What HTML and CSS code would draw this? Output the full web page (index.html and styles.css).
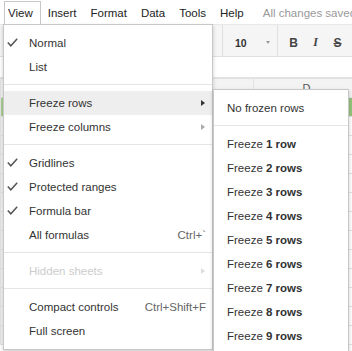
FILE: index.html
```html
<!DOCTYPE html>
<html lang="en">

<head>
    <meta charset="UTF-8">
    <meta name="viewport" content="width=device-width, initial-scale=1.0">
    <title>Sheet - View menu</title>
    <link rel="stylesheet" href="styles.css">
</head>

<body>

    <div class="menubar">
        <div class="mb-item open">View</div>
        <div class="mb-item">Insert</div>
        <div class="mb-item">Format</div>
        <div class="mb-item">Data</div>
        <div class="mb-item">Tools</div>
        <div class="mb-item">Help</div>
        <div class="mb-status">All changes saved</div>
    </div>

    <div class="toolbar">
        <div class="tb-hidden"></div>
        <div class="tb-sep"></div>
        <div class="tb-font-size">
            <span>10</span>
            <span class="tb-caret"></span>
        </div>
        <div class="tb-sep"></div>
        <div class="tb-btn bold">B</div>
        <div class="tb-btn italic">I</div>
        <div class="tb-btn strike">S</div>
    </div>

    <div class="formula-bar"></div>

    <table class="grid">
        <tr class="col-heads">
            <td class="row-head"></td>
            <td class="col-a">A</td>
            <td class="col-b">B</td>
            <td class="col-d">D</td>
            <td class="col-e"></td>
        </tr>
        <tr><td class="row-head selected"></td><td></td><td></td><td class="selected-cell"></td><td></td></tr>
        <tr><td class="row-head"></td><td></td><td></td><td></td><td></td></tr>
        <tr><td class="row-head"></td><td></td><td></td><td></td><td></td></tr>
        <tr><td class="row-head"></td><td></td><td></td><td></td><td></td></tr>
        <tr><td class="row-head"></td><td></td><td></td><td></td><td></td></tr>
        <tr><td class="row-head"></td><td></td><td></td><td></td><td></td></tr>
        <tr><td class="row-head"></td><td></td><td></td><td></td><td></td></tr>
        <tr><td class="row-head"></td><td></td><td></td><td></td><td></td></tr>
        <tr><td class="row-head"></td><td></td><td></td><td></td><td></td></tr>
        <tr><td class="row-head"></td><td></td><td></td><td></td><td></td></tr>
        <tr><td class="row-head"></td><td></td><td></td><td></td><td></td></tr>
        <tr><td class="row-head"></td><td></td><td></td><td></td><td></td></tr>
        <tr><td class="row-head"></td><td></td><td></td><td></td><td></td></tr>
    </table>

    <!-- View dropdown -->
    <div class="menu view-menu">
        <div class="item checked">
            <svg class="check" width="11" height="9" viewBox="0 0 11 9"><path d="M0.8 4.6 L3.8 7.8 L10.2 0.8" /></svg>
            Normal
        </div>
        <div class="item">List</div>
        <div class="sep"></div>
        <div class="item has-sub active">Freeze rows</div>
        <div class="item has-sub">Freeze columns</div>
        <div class="sep"></div>
        <div class="item checked">
            <svg class="check" width="11" height="9" viewBox="0 0 11 9"><path d="M0.8 4.6 L3.8 7.8 L10.2 0.8" /></svg>
            Gridlines
        </div>
        <div class="item checked">
            <svg class="check" width="11" height="9" viewBox="0 0 11 9"><path d="M0.8 4.6 L3.8 7.8 L10.2 0.8" /></svg>
            Protected ranges
        </div>
        <div class="item checked">
            <svg class="check" width="11" height="9" viewBox="0 0 11 9"><path d="M0.8 4.6 L3.8 7.8 L10.2 0.8" /></svg>
            Formula bar
        </div>
        <div class="item">All formulas<span class="key">Ctrl+`</span></div>
        <div class="sep"></div>
        <div class="item has-sub disabled">Hidden sheets</div>
        <div class="sep"></div>
        <div class="item">Compact controls<span class="key">Ctrl+Shift+F</span></div>
        <div class="item">Full screen</div>
    </div>

    <!-- Freeze rows submenu -->
    <div class="menu freeze-menu">
        <div class="item">No frozen rows</div>
        <div class="sep"></div>
        <div class="item">Freeze&nbsp;<b>1 row</b></div>
        <div class="item">Freeze&nbsp;<b>2 rows</b></div>
        <div class="item">Freeze&nbsp;<b>3 rows</b></div>
        <div class="item">Freeze&nbsp;<b>4 rows</b></div>
        <div class="item">Freeze&nbsp;<b>5 rows</b></div>
        <div class="item">Freeze&nbsp;<b>6 rows</b></div>
        <div class="item">Freeze&nbsp;<b>7 rows</b></div>
        <div class="item">Freeze&nbsp;<b>8 rows</b></div>
        <div class="item">Freeze&nbsp;<b>9 rows</b></div>
    </div>

</body>

</html>
```

FILE: styles.css
```css
body {
    margin: 0;
    width: 352px;
    height: 351px;
    overflow: hidden;
    position: relative;
    background: #fff;
    font-family: "Liberation Sans", Arial, sans-serif;
    font-size: 11.5px;
    color: #333;
}

/* menu bar */

.menubar {
    display: flex;
    align-items: flex-start;
    height: 24px;
    padding-left: 4px;
    white-space: nowrap;
    overflow: hidden;
}

.mb-item {
    margin-top: 1px;
    padding: 0 6px;
    line-height: 23px;
    color: #222;
    border: 1px solid transparent;
    border-bottom: 0;
}

.mb-item.open {
    position: relative;
    z-index: 3;
    box-sizing: border-box;
    height: 24px;
    padding: 0 7px 0 3px;
    background: #fff;
    border-color: #c8c8c8;
}

.mb-status {
    margin-top: 1px;
    padding-left: 12px;
    line-height: 25px;
    color: #999;
}

/* toolbar */

.toolbar {
    display: flex;
    align-items: center;
    box-sizing: border-box;
    height: 33px;
    padding-top: 4px;
    background: #f5f5f5;
    border-top: 1px solid #e8e8e8;
    border-bottom: 1px solid #e0e0e0;
}

.tb-hidden {
    width: 222px;
}

.tb-sep {
    align-self: stretch;
    width: 1px;
    margin-top: -4px;
    background: #e0e0e0;
}

.tb-font-size {
    display: flex;
    align-items: center;
    box-sizing: border-box;
    width: 54px;
    padding-left: 12px;
    font-size: 10.5px;
    font-weight: bold;
    color: #333;
}

.tb-caret {
    margin-left: 19px;
    border-left: 2px solid transparent;
    border-right: 2px solid transparent;
    border-top: 3px solid #999;
}

.tb-btn {
    width: 11px;
    margin-left: 11px;
    text-align: center;
    font-size: 12px;
    font-weight: bold;
    color: #444;
}

.tb-btn.bold {
    margin-left: 10px;
}

.tb-btn.italic {
    font-family: "Liberation Serif", serif;
    font-style: italic;
}

.tb-btn.strike {
    text-decoration: line-through;
}

/* sheet */

.formula-bar {
    height: 21px;
    border-bottom: 1px solid #e2e2e2;
    box-sizing: border-box;
}

.grid {
    border-collapse: collapse;
    table-layout: fixed;
    width: 460px;
    font-size: 10px;
    color: #666;
}

.grid td {
    height: 18px;
    padding: 0;
    border: 1px solid #e2e2e2;
    text-align: center;
}

.grid .col-heads td {
    height: 18px;
    background: #f3f3f3;
    color: #555;
    font-size: 11px;
}

.grid .row-head {
    width: 34px;
    background: #f3f3f3;
}

.grid .row-head.selected {
    background: #a9cf93;
}

.grid .selected-cell {
    background: #93c47d;
}

.col-a {
    width: 109px;
}

.col-b {
    width: 107px;
}

.col-d {
    width: 105px;
}

.col-e {
    width: 100px;
}

/* menus */

.menu {
    position: absolute;
    z-index: 2;
    box-sizing: border-box;
    padding: 6px 0;
    background: #fff;
    border: 1px solid #c8c8c8;
    box-shadow: 0 2px 4px rgba(0, 0, 0, 0.2);
    white-space: nowrap;
}

.view-menu {
    left: 3px;
    top: 24px;
    width: 210px;
}

.freeze-menu {
    left: 213px;
    top: 89px;
    width: 136px;
}

.item {
    position: relative;
    display: flex;
    align-items: center;
    justify-content: space-between;
    height: 24px;
    padding: 0 6px 0 25px;
    color: #333;
}

.freeze-menu .item {
    justify-content: flex-start;
    padding-left: 13px;
}

.item.active {
    background: #eee;
}

.item.disabled {
    color: #ccc;
}

.key {
    color: #666;
}

.check {
    position: absolute;
    left: 3px;
    top: 7px;
}

.check path {
    fill: none;
    stroke: #555;
    stroke-width: 1.5;
}

.has-sub::after {
    content: "";
    position: absolute;
    right: 7px;
    top: 9px;
    border-left: 4px solid #aaa;
    border-top: 3px solid transparent;
    border-bottom: 3px solid transparent;
}

.has-sub.active::after {
    border-left-color: #333;
}

.has-sub.disabled::after {
    border-left-color: #ddd;
}

.sep {
    margin: 5px 0 6px;
    border-top: 1px solid #e5e5e5;
}
```
